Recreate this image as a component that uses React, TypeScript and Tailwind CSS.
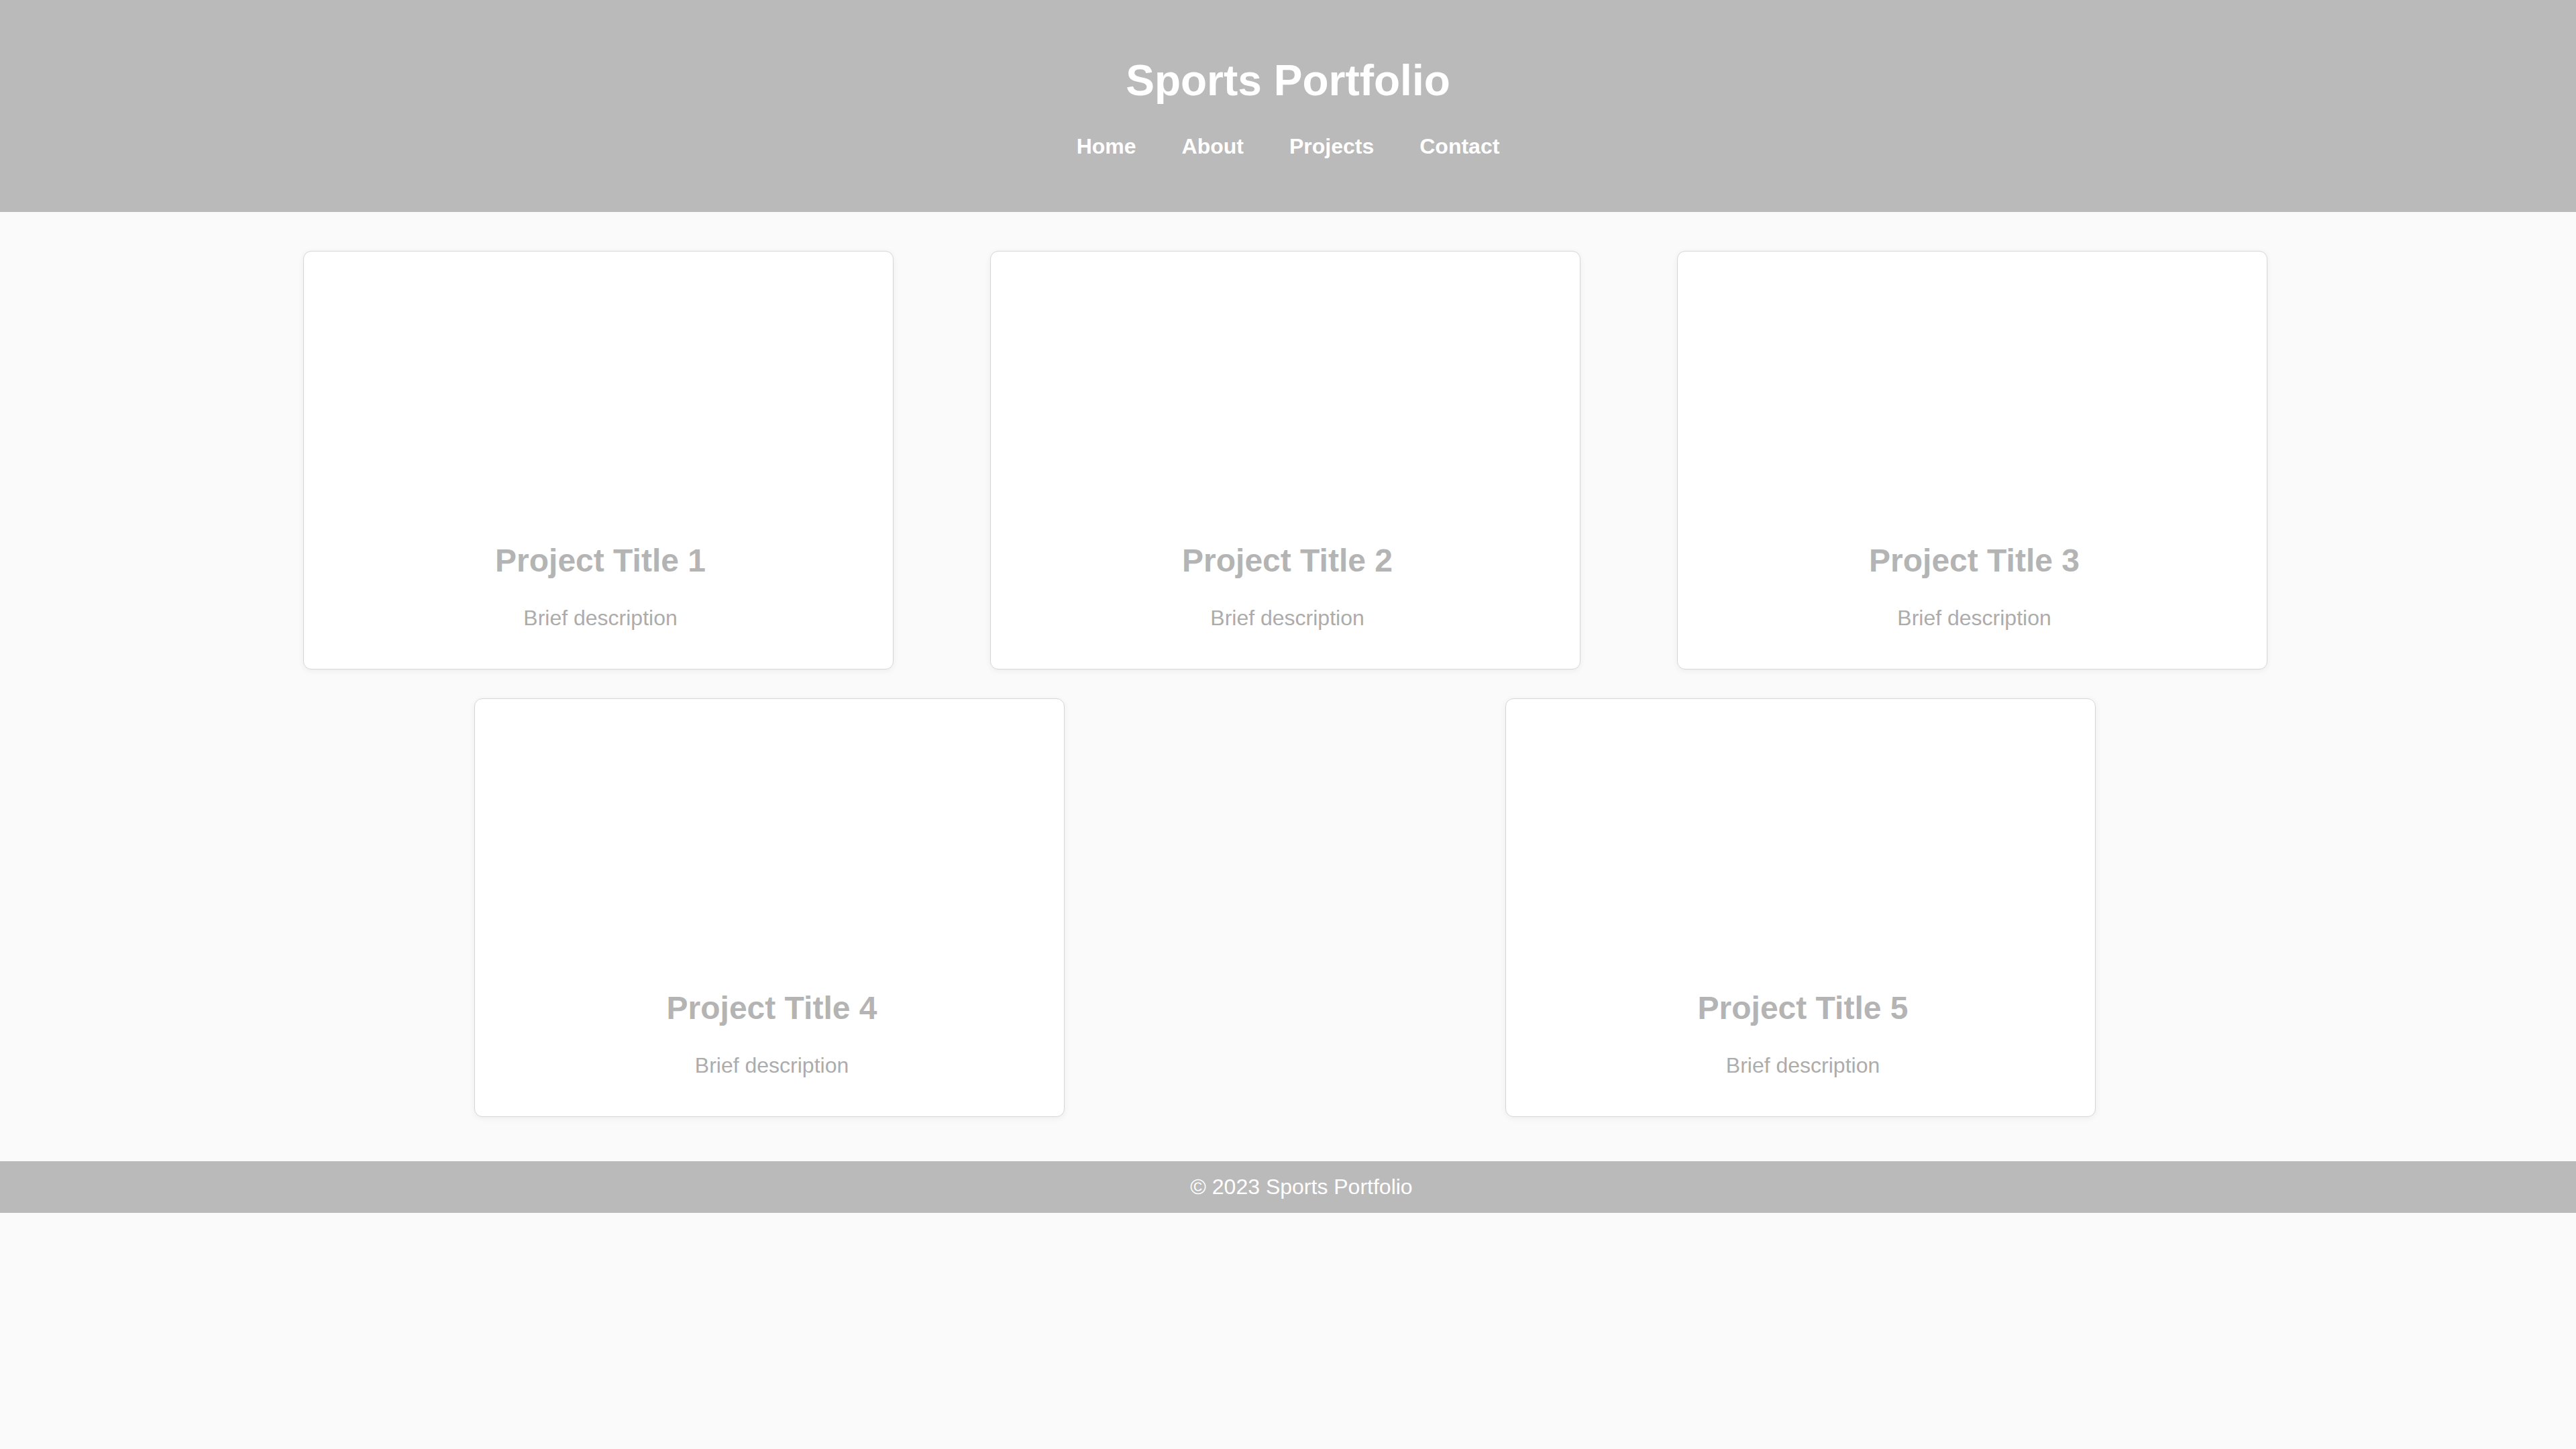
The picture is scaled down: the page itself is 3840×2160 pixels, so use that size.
import React from 'react'

const projects = [1, 2, 3, 4, 5].map((n) => ({
  title: `Project Title ${n}`,
  desc: 'Brief description',
}))

function ProjectCard({ title, desc }: { title: string; desc: string }) {
  return (
    <div className="w-[880px] h-[624px] shrink-0 rounded-[12px] bg-white border border-[#d6d6d6] shadow-[0_2px_10px_rgba(0,0,0,0.06)] flex flex-col items-center pt-[433px] pl-[7px]">
      <h3 className="text-[48px] leading-[55px] font-bold text-[#b4b4b4]">{title}</h3>
      <p className="mt-[40px] text-[32px] leading-[37px] text-[#acacac]">{desc}</p>
    </div>
  )
}

export default function App() {
  return (
    <div className="min-h-screen bg-[#fafafa] font-['Liberation_Sans',Arial,sans-serif]">
      {/* Header */}
      <header className="h-[316px] bg-[#bababa] flex flex-col items-center pt-[84px]">
        <h1 className="text-[64px] leading-[73px] font-bold text-white">Sports Portfolio</h1>
        <nav className="mt-[43px] flex gap-[68px] text-[32px] leading-[37px] font-bold text-white">
          <a href="#">Home</a>
          <a href="#">About</a>
          <a href="#">Projects</a>
          <a href="#">Contact</a>
        </nav>
      </header>

      {/* Projects */}
      <main className="pt-[58px] pb-[66px] pr-[9px] flex flex-col items-center gap-[43px]">
        <div className="flex gap-[144px]">
          {projects.slice(0, 3).map((p) => (
            <ProjectCard key={p.title} {...p} />
          ))}
        </div>
        <div className="flex gap-[657px]">
          {projects.slice(3).map((p) => (
            <ProjectCard key={p.title} {...p} />
          ))}
        </div>
      </main>

      {/* Footer */}
      <footer className="h-[77px] bg-[#bababa] flex items-center justify-center pl-[40px]">
        <p className="text-[32px] leading-[37px] text-white">© 2023 Sports Portfolio</p>
      </footer>
    </div>
  )
}
